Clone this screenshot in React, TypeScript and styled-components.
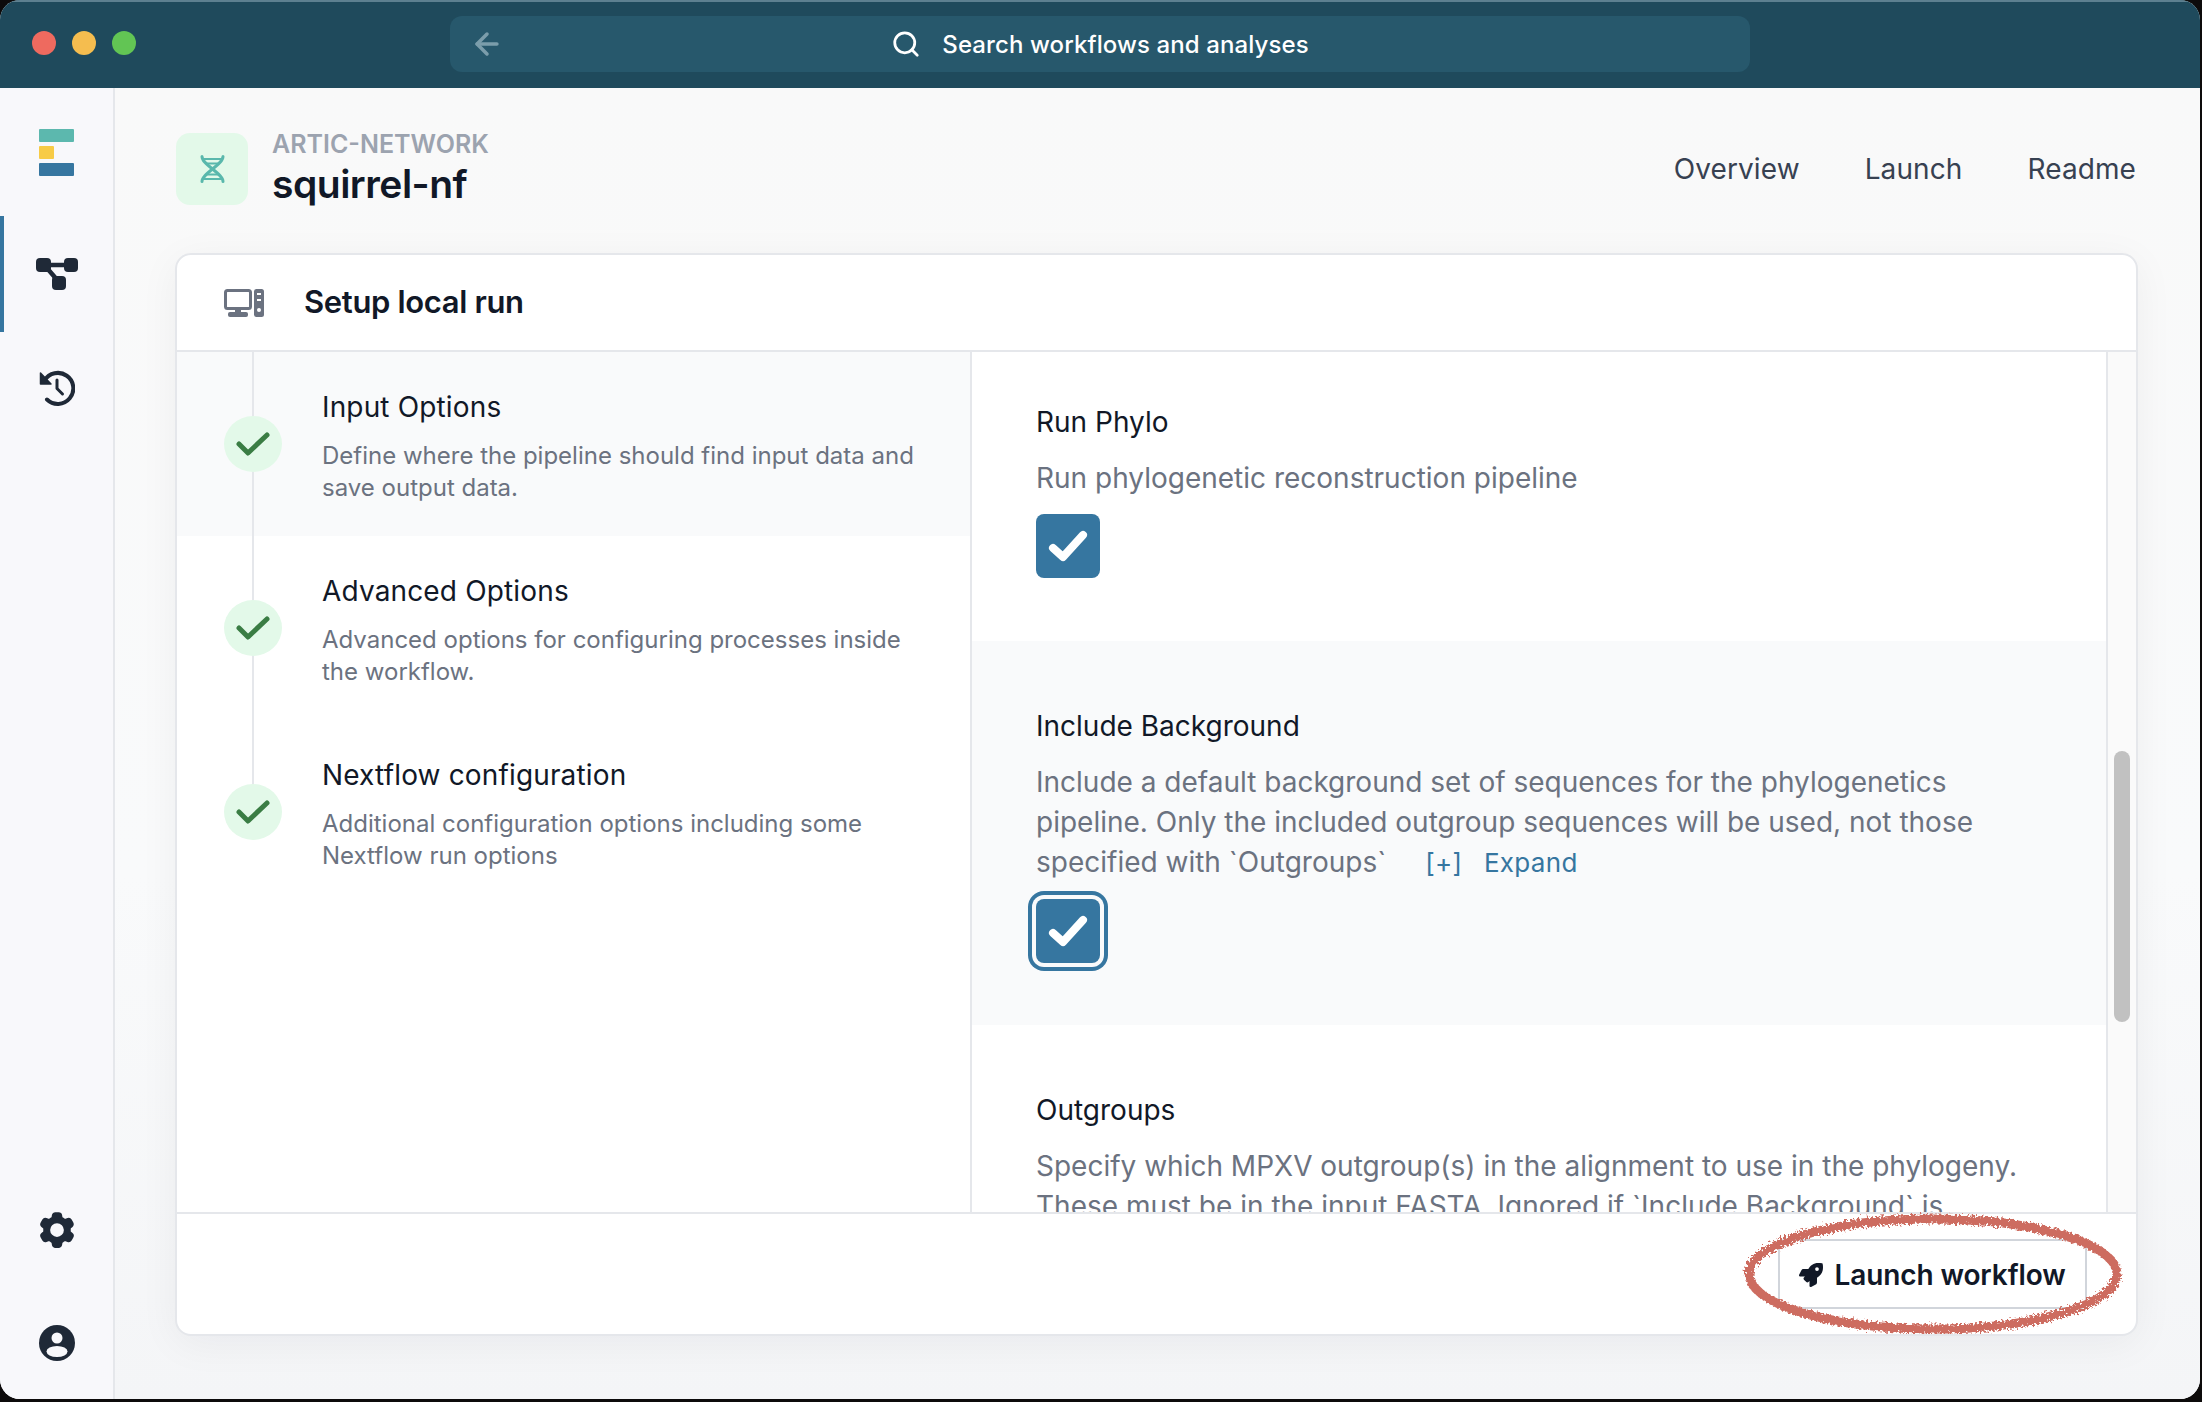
import styled, { createGlobalStyle } from 'styled-components';
import { ArrowLeft, Search } from 'lucide-react';
import { FaRocket } from 'react-icons/fa';
import { HiCog6Tooth } from 'react-icons/hi2';

const GlobalStyle = createGlobalStyle`
  html, body {
    margin: 0;
    padding: 0;
    background: #0d0b0b;
    font-family: Inter, "Noto Sans", "Liberation Sans", sans-serif;
  }
  * {
    box-sizing: border-box;
  }
`;

const Window = styled.div`
  width: 2200px;
  height: 1399px;
  border-radius: 20px;
  overflow: hidden;
  display: flex;
  flex-direction: column;
  background: #f9f9fa;
`;

const TitleBar = styled.header`
  flex: none;
  height: 88px;
  display: grid;
  grid-template-columns: 1fr 1300px 1fr;
  align-items: center;
  background: #1f4a5c;
  border-top: 2px solid #5d8090;
`;

const Lights = styled.div`
  display: flex;
  gap: 16px;
  padding-left: 32px;
  margin-top: -4px;
`;

const Light = styled.span<{ $color: string }>`
  width: 24px;
  height: 24px;
  border-radius: 50%;
  background: ${(p) => p.$color};
`;

const SearchBar = styled.div`
  height: 56px;
  margin-top: -2px;
  border-radius: 12px;
  background: #27586c;
  display: grid;
  grid-template-columns: 1fr auto 1fr;
  align-items: center;
  color: #7b9dab;

  & > svg {
    margin-left: 20px;
  }
`;

const SearchLabel = styled.div`
  display: flex;
  align-items: center;
  gap: 21px;
  color: #fff;
  font-size: 24px;
  font-weight: 500;
  letter-spacing: 0.1px;
`;

const Body = styled.div`
  flex: 1;
  min-height: 0;
  display: flex;
`;

const Sidebar = styled.nav`
  flex: none;
  width: 115px;
  display: flex;
  flex-direction: column;
  background: #f8f8fb;
  border-right: 2px solid #e5e7eb;
`;

const Logo = styled.div`
  height: 128px;
  display: flex;
  flex-direction: column;
  justify-content: center;
  gap: 4px;
  padding-left: 39px;
`;

const LogoBar = styled.span<{ $color: string; $width: number }>`
  display: block;
  height: 13px;
  width: ${(p) => p.$width}px;
  border-radius: 1px;
  background: ${(p) => p.$color};
`;

const NavItem = styled.div<{ $active?: boolean; $padTop?: number; $padBottom?: number }>`
  height: 116px;
  padding: ${(p) => p.$padTop ?? 0}px 0 ${(p) => p.$padBottom ?? 0}px;
  display: flex;
  align-items: center;
  justify-content: center;
  color: #1f2937;
  box-shadow: ${(p) => (p.$active ? 'inset 4px 0 0 #3676a0' : 'none')};
`;

const NavBottom = styled.div`
  margin-top: auto;
  margin-bottom: -2px;
`;

const Main = styled.main`
  flex: 1;
  min-width: 0;
  display: flex;
  flex-direction: column;
  padding: 45px 62px 63px 60px;
  background: linear-gradient(180deg, #f9f9f9 0%, #f9fafb 60%, #f4f5f7 100%);
`;

const PageHeader = styled.div`
  flex: none;
  height: 72px;
  margin-bottom: 48px;
  display: flex;
  align-items: center;
`;

const PipelineIcon = styled.div`
  width: 72px;
  height: 72px;
  margin-left: 1px;
  border-radius: 14px;
  background: #e3f9e9;
  display: flex;
  align-items: center;
  justify-content: center;
`;

const PipelineName = styled.div`
  margin-left: 24px;
  padding-top: 2px;
  display: flex;
  flex-direction: column;
`;

const Org = styled.div`
  color: #9ca3af;
  font-size: 25px;
  line-height: 26px;
  font-weight: 600;
`;

const Repo = styled.div`
  margin-top: 2px;
  color: #111827;
  font-size: 39px;
  line-height: 50px;
  font-weight: 600;
  letter-spacing: -0.5px;
`;

const Tabs = styled.div`
  margin-left: auto;
  padding-right: 2px;
  display: flex;
  gap: 65px;
`;

const Tab = styled.a`
  color: #374151;
  font-size: 28px;
  font-weight: 400;
  letter-spacing: 0.1px;
`;

const Card = styled.section`
  flex: 1;
  min-height: 0;
  display: flex;
  flex-direction: column;
  background: #fff;
  border: 2px solid #e5e7eb;
  border-radius: 16px;
  box-shadow: 0 8px 40px rgba(17, 24, 39, 0.05);
  overflow: hidden;
`;

const CardHeader = styled.div`
  flex: none;
  height: 97px;
  display: flex;
  align-items: center;
  gap: 40px;
  padding-left: 47px;
  border-bottom: 2px solid #e5e7eb;
`;

const CardTitle = styled.h2`
  margin: 0 0 2px;
  color: #111827;
  font-size: 31px;
  font-weight: 600;
  letter-spacing: -0.35px;
`;

const CardBody = styled.div`
  flex: 1;
  min-height: 0;
  display: flex;
`;

const Steps = styled.div`
  flex: none;
  width: 795px;
  border-right: 2px solid #e5e7eb;
`;

const Step = styled.div<{ $active?: boolean; $last?: boolean }>`
  position: relative;
  height: 184px;
  display: flex;
  align-items: center;
  gap: 40px;
  padding: 0 50px 0 47px;
  background: ${(p) => (p.$active ? '#f9fafb' : 'transparent')};

  &::before {
    content: '';
    position: absolute;
    left: 75px;
    top: 0;
    width: 2px;
    height: ${(p) => (p.$last ? '50%' : '100%')};
    background: #e5e7eb;
  }
`;

const StepCircle = styled.div`
  position: relative;
  flex: none;
  width: 58px;
  height: 56px;
  border-radius: 50%;
  background: #e3f9e9;
`;

const StepBody = styled.div`
  padding-top: 4px;
`;

const StepTitle = styled.div`
  color: #111827;
  font-size: 28px;
  line-height: 36px;
  font-weight: 400;
  letter-spacing: 0.15px;
  margin-bottom: 15px;
`;

const StepText = styled.div`
  color: #6b7280;
  font-size: 24px;
  line-height: 32px;
`;

const FormPane = styled.div`
  flex: 1;
  min-width: 0;
  overflow: hidden;
`;

const Field = styled.div<{ $shaded?: boolean; $top: number; $bottom: number }>`
  padding: ${(p) => p.$top}px 64px ${(p) => p.$bottom}px 64px;
  background: ${(p) => (p.$shaded ? '#f9fafb' : 'transparent')};
`;

const FieldTitle = styled.div`
  color: #111827;
  font-size: 28px;
  line-height: 40px;
  margin-bottom: 16px;
`;

const FieldText = styled.div`
  color: #6b7280;
  font-size: 28px;
  line-height: 40px;
  margin-bottom: 16px;
`;

const ExpandLink = styled.a`
  margin-left: 39px;
  color: #3676a0;
  font-size: 26px;
  letter-spacing: 0.3px;
  word-spacing: 14px;
`;

const Checkbox = styled.div<{ $focused?: boolean }>`
  width: 64px;
  height: 64px;
  border-radius: 8px;
  background: #3676a0;
  box-shadow: ${(p) => (p.$focused ? '0 0 0 4px #f9fafb, 0 0 0 8px #3676a0' : 'none')};
`;

const Gutter = styled.div`
  flex: none;
  width: 30px;
  padding: 399px 0 0 6px;
  background: #fafafa;
  border-left: 2px solid #e5e7eb;
`;

const Thumb = styled.div`
  width: 16px;
  height: 271px;
  border-radius: 8px;
  background: #c1c1c1;
`;

const CardFooter = styled.div`
  flex: none;
  height: 122px;
  padding: 25px 49px 0 0;
  display: flex;
  justify-content: flex-end;
  border-top: 2px solid #e5e7eb;
`;

const ButtonWrap = styled.div`
  position: relative;
  height: 70px;
`;

const LaunchButton = styled.button`
  width: 309px;
  height: 70px;
  padding-top: 2px;
  display: flex;
  align-items: center;
  justify-content: center;
  gap: 11px;
  background: #fff;
  border: 2px solid #d1d5db;
  border-radius: 6px;
  color: #111827;
  font-family: inherit;
  font-size: 28px;
  font-weight: 600;
  letter-spacing: -0.1px;
`;

const Scribble = styled.svg`
  position: absolute;
  left: -45px;
  top: -38px;
  pointer-events: none;
`;

const WorkflowIcon = () => (
  <svg width="42" height="32" viewBox="0 0 42 32" fill="currentColor">
    <path d="M10 7 H34 M10 9 L23 24" stroke="currentColor" strokeWidth="4.5" />
    <rect x="0" y="0" width="15" height="14" rx="4" />
    <rect x="28" y="0" width="14" height="14" rx="4" />
    <rect x="16" y="18" width="14" height="14" rx="4" />
  </svg>
);

const HistoryIcon = () => (
  <svg width="36" height="36" viewBox="0 0 36 36" fill="none" stroke="currentColor">
    <path d="M5.5 10.5 A15.5 15.5 0 1 1 8 29.5" strokeWidth="4" strokeLinecap="round" />
    <path d="M1.5 3 V14 H12 Z" fill="currentColor" strokeWidth="1.5" strokeLinejoin="round" />
    <path d="M18 10 V18.5 L23.5 24" strokeWidth="3" strokeLinecap="round" strokeLinejoin="round" />
  </svg>
);

const UserIcon = () => (
  <svg width="36" height="36" viewBox="0 0 36 36">
    <circle cx="18" cy="18" r="18" fill="#1f2937" />
    <circle cx="18" cy="13" r="5.5" fill="#f8f8fb" />
    <ellipse cx="18" cy="26.5" rx="10.5" ry="5.5" fill="#f8f8fb" />
  </svg>
);

const DnaIcon = () => (
  <svg width="25" height="28" viewBox="0 0 25 28" fill="none" stroke="#5ab8ac" strokeWidth="3" strokeLinecap="round">
    <path d="M2 1.5 C2 10 23 18 23 26.5" />
    <path d="M23 1.5 C23 10 2 18 2 26.5" />
    <path d="M3 4 H22 M7 8.5 H18 M7 19.5 H18 M3 24 H22" strokeWidth="2.2" />
  </svg>
);

const MonitorIcon = () => (
  <svg width="40" height="28" viewBox="0 0 40 28" fill="#6b7280">
    <rect x="1.5" y="1.5" width="25" height="18" rx="2" fill="none" stroke="#6b7280" strokeWidth="3" />
    <rect x="11" y="20" width="6" height="4" />
    <rect x="4" y="23" width="20" height="5" rx="2" />
    <rect x="30" y="0" width="10" height="28" rx="2.5" />
    <rect x="33" y="4" width="4" height="2" fill="#fff" />
    <rect x="33" y="10" width="4" height="2" fill="#fff" />
    <circle cx="35" cy="21" r="2" fill="#fff" />
  </svg>
);

const CircleCheck = () => (
  <svg width="58" height="56" viewBox="0 0 58 56" fill="none">
    <path d="M15 28 L24 37 L43 19" stroke="#3a7d44" strokeWidth="5" strokeLinecap="round" strokeLinejoin="round" />
  </svg>
);

const BoxCheck = () => (
  <svg width="64" height="64" viewBox="0 0 64 64" fill="none">
    <path d="M17 34 L27 43 L47 21" stroke="#fff" strokeWidth="8" strokeLinecap="round" strokeLinejoin="round" />
  </svg>
);

const steps = [
  {
    title: 'Input Options',
    text: 'Define where the pipeline should find input data and save output data.',
  },
  {
    title: 'Advanced Options',
    text: 'Advanced options for configuring processes inside the workflow.',
  },
  {
    title: 'Nextflow configuration',
    text: 'Additional configuration options including some Nextflow run options',
  },
];

export default function App() {
  return (
    <>
      <GlobalStyle />
      <Window>
        <TitleBar>
          <Lights>
            <Light $color="#ee6a5f" />
            <Light $color="#f5bd4f" />
            <Light $color="#62c554" />
          </Lights>
          <SearchBar>
            <ArrowLeft size={34} strokeWidth={2.5} />
            <SearchLabel>
              <Search size={30} strokeWidth={2.2} />
              Search workflows and analyses
            </SearchLabel>
          </SearchBar>
        </TitleBar>
        <Body>
          <Sidebar>
            <Logo>
              <LogoBar $color="#5cb8ae" $width={35} />
              <LogoBar $color="#f7cb46" $width={15} />
              <LogoBar $color="#3676a0" $width={35} />
            </Logo>
            <NavItem $active>
              <WorkflowIcon />
            </NavItem>
            <NavItem $padBottom={5}>
              <HistoryIcon />
            </NavItem>
            <NavBottom>
              <NavItem $padTop={5}>
                <HiCog6Tooth size={44} />
              </NavItem>
              <NavItem>
                <UserIcon />
              </NavItem>
            </NavBottom>
          </Sidebar>
          <Main>
            <PageHeader>
              <PipelineIcon>
                <DnaIcon />
              </PipelineIcon>
              <PipelineName>
                <Org>ARTIC-NETWORK</Org>
                <Repo>squirrel-nf</Repo>
              </PipelineName>
              <Tabs>
                <Tab>Overview</Tab>
                <Tab>Launch</Tab>
                <Tab>Readme</Tab>
              </Tabs>
            </PageHeader>
            <Card>
              <CardHeader>
                <MonitorIcon />
                <CardTitle>Setup local run</CardTitle>
              </CardHeader>
              <CardBody>
                <Steps>
                  {steps.map((step, i) => (
                    <Step key={step.title} $active={i === 0} $last={i === steps.length - 1}>
                      <StepCircle>
                        <CircleCheck />
                      </StepCircle>
                      <StepBody>
                        <StepTitle>{step.title}</StepTitle>
                        <StepText>{step.text}</StepText>
                      </StepBody>
                    </Step>
                  ))}
                </Steps>
                <FormPane>
                  <Field $top={50} $bottom={63}>
                    <FieldTitle>Run Phylo</FieldTitle>
                    <FieldText>Run phylogenetic reconstruction pipeline</FieldText>
                    <Checkbox>
                      <BoxCheck />
                    </Checkbox>
                  </Field>
                  <Field $shaded $top={65} $bottom={62}>
                    <FieldTitle>Include Background</FieldTitle>
                    <FieldText>
                      Include a default background set of sequences for the phylogenetics pipeline. Only the included
                      outgroup sequences will be used, not those specified with `Outgroups`
                      <ExpandLink>[+] Expand</ExpandLink>
                    </FieldText>
                    <Checkbox $focused>
                      <BoxCheck />
                    </Checkbox>
                  </Field>
                  <Field $top={65} $bottom={0}>
                    <FieldTitle>Outgroups</FieldTitle>
                    <FieldText>
                      Specify which MPXV outgroup(s) in the alignment to use in the phylogeny. These must be in the
                      input FASTA. Ignored if `Include Background` is
                    </FieldText>
                  </Field>
                </FormPane>
                <Gutter>
                  <Thumb />
                </Gutter>
              </CardBody>
              <CardFooter>
                <ButtonWrap>
                  <LaunchButton>
                    <FaRocket size={24} />
                    Launch workflow
                  </LaunchButton>
                  <Scribble width="400" height="146" viewBox="0 0 400 146" fill="none">
                    <filter id="rough" x="-5%" y="-10%" width="110%" height="120%">
                      <feTurbulence type="fractalNoise" baseFrequency="0.45" numOctaves="2" seed="4" />
                      <feDisplacementMap in="SourceGraphic" scale="9" />
                    </filter>
                    <ellipse cx="200" cy="73" rx="184" ry="55" stroke="#cd6c60" strokeWidth="9" filter="url(#rough)" />
                  </Scribble>
                </ButtonWrap>
              </CardFooter>
            </Card>
          </Main>
        </Body>
      </Window>
    </>
  );
}
